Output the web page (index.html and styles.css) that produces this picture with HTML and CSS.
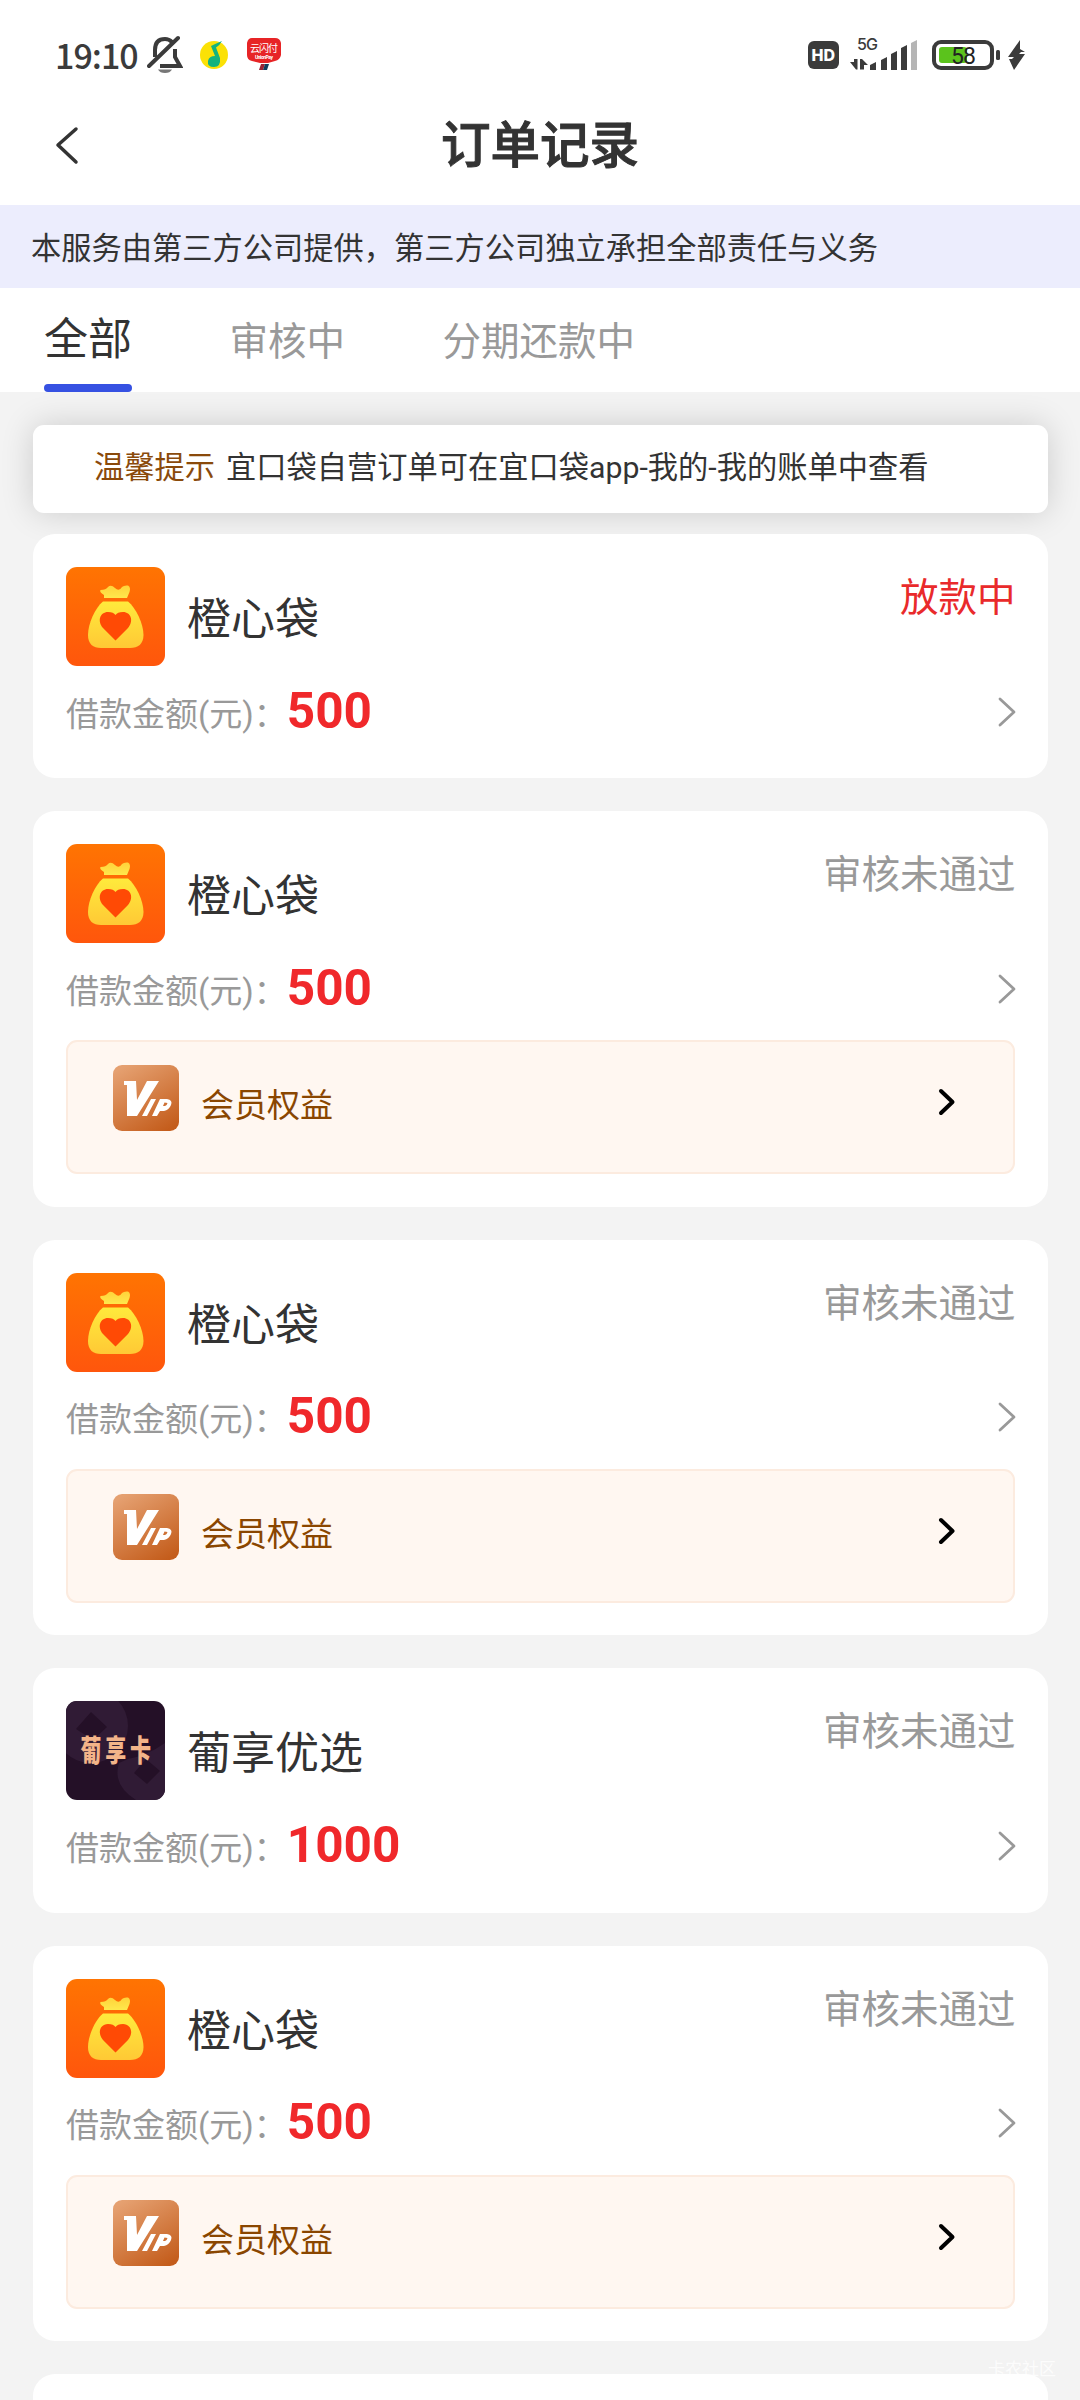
FILE: index.html
```html
<!DOCTYPE html>
<html lang="zh-CN">
<head>
<meta charset="utf-8">
<title>订单记录</title>
<link rel="stylesheet" href="styles.css">
</head>
<body>
<svg class="defs" width="0" height="0" aria-hidden="true">
  <defs>
    <linearGradient id="orange" x1="0" y1="0" x2="0" y2="1"><stop offset="0" stop-color="#ff7402"/><stop offset="1" stop-color="#ff560c"/></linearGradient>
    <linearGradient id="gold" x1="0" y1="0" x2="0" y2="1"><stop offset="0" stop-color="#ffea3c"/><stop offset="1" stop-color="#ffc935"/></linearGradient>
    <linearGradient id="neck" x1="0" y1="0" x2="0" y2="1"><stop offset="0" stop-color="#ffd23a"/><stop offset="1" stop-color="#ffe84c"/></linearGradient>
    <linearGradient id="bronze" x1="0.2" y1="0" x2="0.8" y2="1"><stop offset="0" stop-color="#e5a070"/><stop offset="1" stop-color="#c45d1c"/></linearGradient>
    <clipPath id="tile"><rect width="99" height="99" rx="11"/></clipPath>
  </defs>
  <symbol id="bag" viewBox="0 0 99 99">
    <rect width="99" height="99" rx="11" fill="url(#orange)"/>
    <path d="M38 31 L38 28 Q33 25 34.500 23 Q40 23 42 20 Q45 17 49 21 Q53 25 56 20 Q58 18 62 18.500 Q65 20 63.500 25 L61 31 Z" fill="url(#neck)"/>
    <path d="M37 34.500 H62 C70 41 77.500 57 77.500 68 C77.500 77 72 81 64 81 H35 C27 81 22 77 22 68 C22 57 29 41 37 34.500 Z" fill="url(#gold)"/>
    <path d="M49.500 73.500 L37 61 C31 54 34 45 42 45 C46 45 48 46 49.500 48 C51 46 53 45 57 45 C65 45 68 54 62 61 Z" fill="#ff4a05"/>
  </symbol>
  <symbol id="vip" viewBox="0 0 66 66">
    <rect width="66" height="66" rx="9" fill="url(#bronze)"/>
    <path d="M11 16 H23 L24 35 L34 16 H46 L24 51 H14 L14 20 H11 Z M38 34 H43 L34 51 H29 Z" fill="#fff"/>
    <path fill-rule="evenodd" d="M47 34 H54 Q60 35 58 40 Q56 45 51 46 H47 L44 51 H39 Z M51.500 37.500 L50 41 H52 Q54 40.500 54.500 38 Q53 37.500 51.500 37.500 Z" fill="#fff"/>
  </symbol>
  <symbol id="next" viewBox="0 0 18 30"><path d="M2 2 L16 15 L2 28" fill="none" stroke="currentColor" stroke-width="2.800" stroke-linecap="round" stroke-linejoin="round"/></symbol>
  <symbol id="next-bold" viewBox="0 0 18 30"><path d="M3 4 L14.500 15 L3 26" fill="none" stroke="currentColor" stroke-width="4" stroke-linecap="round" stroke-linejoin="round"/></symbol>
</svg>

<header class="statusbar">
  <div class="status-left">
    <span class="clock">19:10</span>
    <svg class="bell" width="36" height="40" viewBox="0 0 36 40" fill="none" stroke="#3b3b3b" stroke-width="4">
      <path d="M8 22 V15 Q8 4 18 4 Q22 4 25 7 M28 14 V22 L33 31 H13"/>
      <path d="M2 31 L31 3" stroke-linecap="round"/>
      <path d="M11 34.500 H25 Q23 38 18 38 Q13 38 11 34.500 Z" fill="#777" stroke="none"/>
    </svg>
    <svg class="music" width="28" height="28" viewBox="0 0 28 28">
      <circle cx="14" cy="14" r="14" fill="#fbe106"/>
      <path d="M11 5 Q15 3 22 0 Q20 4 16 6.500 L20 17 Q21 26 14 26 Q7 26 8 20 Q9 15 15 15 Z" fill="#14b37d"/>
    </svg>
    <svg class="pay" width="36" height="34" viewBox="0 0 36 34">
      <path d="M6 1 H29 Q34 1 35 6 V18 Q34 23 29 24 L22 26 H14 L6 24 Q1 23 1 18 V6 Q2 1 6 1 Z" fill="#e72426"/>
      <path d="M15 27 H19 L17 33 H13 Z" fill="#9a2334"/><path d="M19 27 H23 L21 33 H17 Z" fill="#123e5e"/>
      <text class="pay-cn" x="4" y="14.500" textLength="28">云闪付</text>
      <text class="pay-en" x="9" y="22" textLength="18">UnionPay</text>
    </svg>
  </div>
  <svg class="status-right" width="224" height="44" viewBox="0 0 224 44">
    <rect x="0" y="7" width="31" height="28" rx="6" fill="#3b3b3b"/>
    <text class="hd" x="3.500" y="26.500" textLength="23.500">HD</text>
    <text class="net" x="49" y="15.500" textLength="21">5G</text>
    <g fill="#3b3b3b">
      <path d="M42 28 L46 28 V25 H49.500 V35.500 H48 Z M52 25 H54 L60 31 H56 V35.500 H52 Z"/>
      <path d="M62 36 V31 L68 28 V36 Z M73 36 V26 L79 23 V36 Z M83 36 V20 L89 17 V36 Z M93 36 V14 L99 11 V36 Z"/>
      <path d="M103 36 V9 L109 6 V36 Z" fill="#b5b5b5"/>
      <rect x="188" y="16" width="4" height="10" rx="1.500"/>
      <path d="M212 6 L200 23 H206 L204 25 H201 L206 36 L217 20 H211 L213 18 H217 L212 15 Z"/>
    </g>
    <rect x="126" y="8" width="58" height="26" rx="7" fill="none" stroke="#3b3b3b" stroke-width="4"/>
    <rect x="131" y="13" width="28" height="16" rx="3" fill="#5bc31c"/>
    <text class="level" x="143" y="30" textLength="25">58</text>
  </svg>
</header>

<nav class="titlebar">
  <svg class="back" width="24" height="42" viewBox="0 0 24 42"><path d="M21 4 L3 20 L21 37" fill="none" stroke="#333" stroke-width="3.500" stroke-linecap="round" stroke-linejoin="round"/></svg>
  <h1 class="title">订单记录</h1>
</nav>

<p class="notice">本服务由第三方公司提供，第三方公司独立承担全部责任与义务</p>

<div class="tabs">
  <span class="tab tab-active">全部</span>
  <span class="tab">审核中</span>
  <span class="tab">分期还款中</span>
</div>

<main class="content">
  <p class="tip"><span class="tip-head">温馨提示</span><span>宜口袋自营订单可在宜口袋app-我的-我的账单中查看</span></p>

  <section class="order">
    <div class="order-head"><svg class="logo"><use href="#bag"/></svg><h2 class="name">橙心袋</h2><span class="state state-active">放款中</span></div>
    <div class="order-row"><span class="label">借款金额(元)：</span><b class="amount">500</b><svg class="arrow"><use href="#next"/></svg></div>
  </section>

  <section class="order order-vip">
    <div class="order-head"><svg class="logo"><use href="#bag"/></svg><h2 class="name">橙心袋</h2><span class="state">审核未通过</span></div>
    <div class="order-row"><span class="label">借款金额(元)：</span><b class="amount">500</b><svg class="arrow"><use href="#next"/></svg></div>
    <div class="benefit"><svg class="vip"><use href="#vip"/></svg><span class="benefit-name">会员权益</span><svg class="arrow-bold"><use href="#next-bold"/></svg></div>
  </section>

  <section class="order order-vip">
    <div class="order-head"><svg class="logo"><use href="#bag"/></svg><h2 class="name">橙心袋</h2><span class="state">审核未通过</span></div>
    <div class="order-row"><span class="label">借款金额(元)：</span><b class="amount">500</b><svg class="arrow"><use href="#next"/></svg></div>
    <div class="benefit"><svg class="vip"><use href="#vip"/></svg><span class="benefit-name">会员权益</span><svg class="arrow-bold"><use href="#next-bold"/></svg></div>
  </section>

  <section class="order">
    <div class="order-head">
      <svg class="logo" viewBox="0 0 99 99">
        <g clip-path="url(#tile)">
          <rect width="99" height="99" fill="#241027"/>
          <circle cx="25" cy="25" r="37" fill="#301b35"/>
          <path d="M25 11 L41 26 L27 39 L10 28 Z" fill="#241027"/>
          <path d="M62 58 Q82 54 99 42 V99 H70 Q46 84 53 62 Z" fill="#301b35"/>
          <path d="M80 58 L94 70 L81 83 L68 72 Z" fill="#241027"/>
        </g>
        <text class="logo-text" transform="translate(14.500 60) scale(0.840 1.200)" textLength="84">葡享卡</text>
      </svg>
      <h2 class="name">葡享优选</h2><span class="state">审核未通过</span>
    </div>
    <div class="order-row"><span class="label">借款金额(元)：</span><b class="amount">1000</b><svg class="arrow"><use href="#next"/></svg></div>
  </section>

  <section class="order order-vip">
    <div class="order-head"><svg class="logo"><use href="#bag"/></svg><h2 class="name">橙心袋</h2><span class="state">审核未通过</span></div>
    <div class="order-row"><span class="label">借款金额(元)：</span><b class="amount">500</b><svg class="arrow"><use href="#next"/></svg></div>
    <div class="benefit"><svg class="vip"><use href="#vip"/></svg><span class="benefit-name">会员权益</span><svg class="arrow-bold"><use href="#next-bold"/></svg></div>
  </section>

  <section class="order order-peek"></section>
</main>
<span class="watermark">卡农社区</span>
</body>
</html>
```
FILE: styles.css
```css
* { box-sizing: border-box; margin: 0; padding: 0; }

body {
  position: relative;
  width: 1080px;
  height: 2400px;
  overflow: hidden;
  display: flex;
  flex-direction: column;
  background: #f3f3f3;
  color: #333;
  font-family: Roboto, "Noto Sans CJK SC", sans-serif;
}

svg { display: block; flex: none; }
.defs { position: absolute; }

.statusbar {
  height: 90px;
  flex: none;
  display: flex;
  justify-content: space-between;
  align-items: flex-start;
  padding: 33px 48px 0 55px;
  background: #fff;
}
.status-left { display: flex; }
.clock {
  width: 92px;
  margin-top: -1px;
  font: 500 34px/46px "Noto Sans CJK SC", sans-serif;
  letter-spacing: -1px;
  color: #3b3b3b;
  white-space: nowrap;
}
.bell { margin-top: 2px; }
.music { margin: 8px 0 0 17px; }
.pay { margin: 4px 0 0 18px; }
.pay-cn { font: 400 10px "Noto Sans CJK SC", sans-serif; fill: #fff; }
.pay-en { font: 700 5px Roboto, sans-serif; fill: #fff; }
.status-right { margin-top: 1px; }
.hd { font: 800 16px Inter, sans-serif; fill: #fff; }
.net { font: 500 16px Inter, sans-serif; fill: #3b3b3b; }
.level { font: 400 23px Roboto, sans-serif; fill: #222; }

.titlebar {
  height: 115px;
  flex: none;
  display: grid;
  grid-template-columns: 54px 1fr 54px;
  align-items: center;
  padding-bottom: 3px;
  background: #fff;
}
.back { justify-self: end; margin-right: -25px; }
.title {
  text-align: center;
  font-size: 49.5px;
  line-height: 72px;
  font-weight: 500;
  -webkit-text-stroke: 1px #333;
}

.notice {
  height: 83px;
  flex: none;
  padding-left: 31px;
  font-size: 30.25px;
  line-height: 87px;
  background: #ecedfd;
}

.tabs {
  height: 104px;
  flex: none;
  display: flex;
  gap: 97.5px;
  padding-left: 44px;
  background: #fff;
}
.tab { font-size: 38.5px; line-height: 107px; color: #999; }
.tab-active {
  display: flex;
  flex-direction: column;
  font-size: 44px;
  line-height: 104px;
  color: #333;
}
.tab-active::after {
  content: "";
  height: 8px;
  flex: none;
  margin-top: -8px;
  border-radius: 4px;
  background: #3651e2;
}

.content { display: flex; flex-direction: column; padding: 33px 32.5px 0 33px; }
.tip {
  height: 88px;
  flex: none;
  display: flex;
  gap: 11px;
  padding-left: 61px;
  margin-bottom: 21px;
  border-radius: 11px;
  background: #fff;
  box-shadow: 0 0 33px rgba(0, 0, 0, 0.16);
  font-size: 30.25px;
  line-height: 85px;
  white-space: nowrap;
}
.tip-head { color: #8a4a0b; }

.order {
  height: 244.3px;
  flex: none;
  margin-bottom: 33px;
  padding: 33px 33px 0;
  border-radius: 22px;
  background: #fff;
  position: relative;
}
.order-vip { height: 395.5px; }
.order-peek { height: 26px; margin-bottom: 0; padding: 0; border-radius: 22px 22px 0 0; }
.order-head { display: flex; height: 99px; }
.logo { width: 99px; height: 99px; }
.logo-text { font: 900 25px "Noto Sans CJK SC", sans-serif; fill: #f3b489; }
.name {
  flex: 1;
  margin-left: 22px;
  font-size: 44px;
  line-height: 107px;
  font-weight: 400;
}
.state { margin-right: -1px; font-size: 38.5px; line-height: 61px; color: #999; }
.state-active { color: #e92a2b; }

.order-row { display: flex; align-items: center; height: 97px; padding-bottom: 6px; }
.label { font-size: 33px; color: #999; }
.amount { flex: 1; margin-top: -2px; font-size: 49.5px; line-height: 60px; color: #f0282b; }
.arrow { width: 18px; height: 30px; margin-right: -1px; color: #999; }

.benefit {
  display: flex;
  height: 134px;
  padding: 23px 57px 0 45px;
  border: 2px solid #fcebdf;
  border-radius: 11px;
  background: #fff7f1;
}
.vip { width: 66px; height: 66px; }
.benefit-name { flex: 1; margin-left: 22px; font-size: 33px; line-height: 81px; color: #8a4600; }
.arrow-bold { width: 18px; height: 30px; margin-top: 22px; color: #000; }

.watermark {
  position: absolute;
  left: 988px;
  top: 2357px;
  font-size: 17px;
  line-height: 24px;
  color: #fff;
  opacity: 0.8;
}
```
